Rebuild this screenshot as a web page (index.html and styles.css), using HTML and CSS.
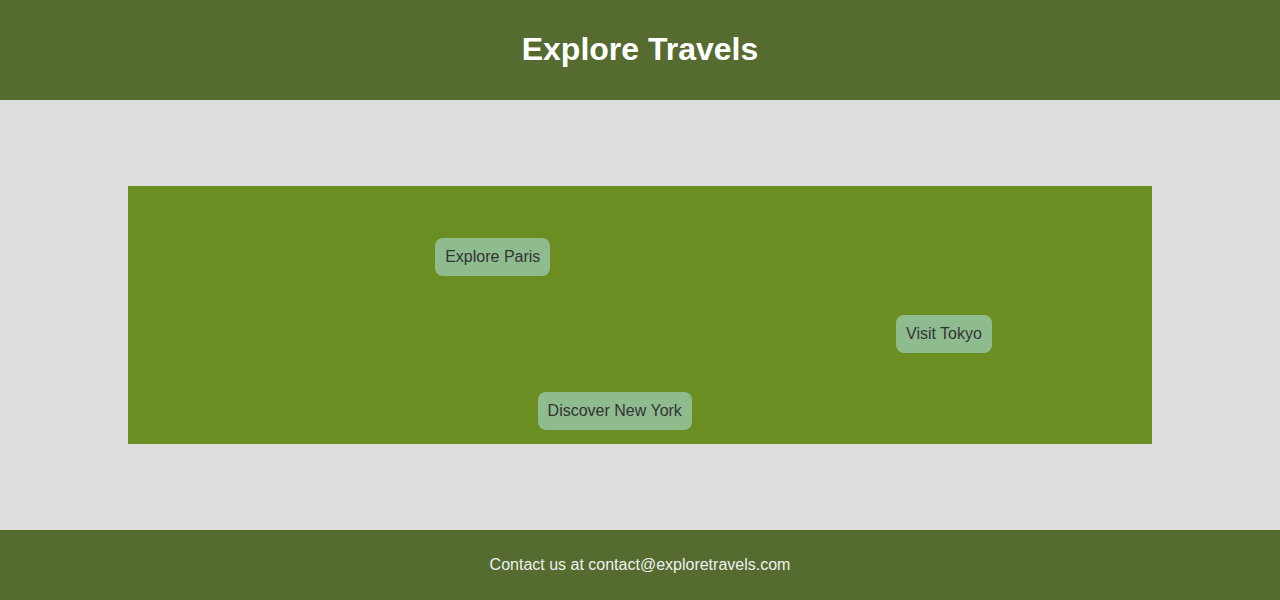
FILE: index.html
```html
<!DOCTYPE html>
<html lang="en">
<head>
<meta charset="utf-8">
<title>Explore Travels</title>
<link rel="stylesheet" href="styles.css">
</head>
<body>
<header class="site-header">
  <h1 class="site-title">Explore Travels</h1>
</header>
<main class="main">
  <div class="map">
    <button class="pin" style="left:30%;top:20%">Explore Paris</button>
    <button class="pin" style="left:75%;top:50%">Visit Tokyo</button>
    <button class="pin" style="left:40%;top:80%">Discover New York</button>
  </div>
</main>
<footer class="site-footer">
  <p class="footer-text">Contact us at contact@exploretravels.com</p>
</footer>
</body>
</html>
```

FILE: styles.css
```css
* { box-sizing: border-box; }
html, body { margin: 0; padding: 0; }
body {
  font-family: "Liberation Sans", Arial, sans-serif;
  background: #dddddd;
  height: 600px;
  display: flex;
  flex-direction: column;
}
.site-header {
  background: #556b2f;
  height: 100px;
  padding-bottom: 2px;
  display: flex;
  align-items: center;
  justify-content: center;
}
.site-title {
  margin: 0;
  color: #ffffff;
  font-size: 32px;
  font-weight: bold;
}
.main {
  height: 430px;
  display: flex;
  align-items: center;
  justify-content: center;
}
.map {
  position: relative;
  width: 1024px;
  height: 258px;
  background: #6b8e23;
}
.pin {
  position: absolute;
  background: #8fbc8f;
  color: #333333;
  border: none;
  border-radius: 8px;
  padding: 10px;
  font-family: "Liberation Sans", Arial, sans-serif;
  font-size: 16px;
  line-height: 18px;
  cursor: pointer;
}
.site-footer {
  background: #556b2f;
  height: 70px;
  display: flex;
  align-items: center;
  justify-content: center;
}
.footer-text {
  margin: 0;
  color: #f0f0f0;
  font-size: 16px;
}
```
